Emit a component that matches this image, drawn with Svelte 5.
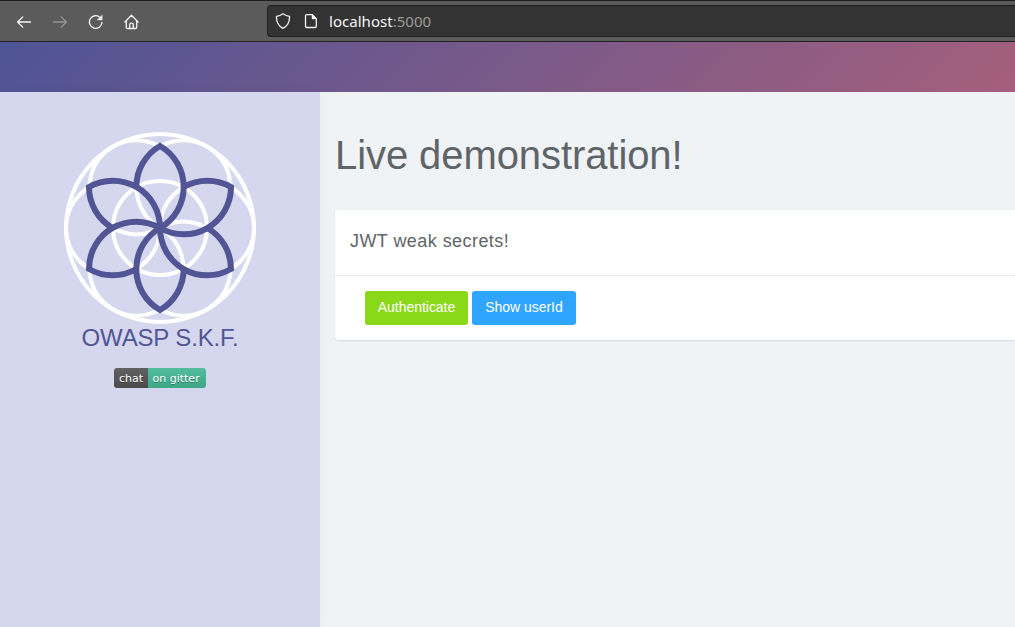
<script>
  const turns = [0, 60, 120, 180, 240, 300];
</script>

<div class="browser">
  <nav class="tools">
    <svg viewBox="0 0 16 16"><path d="M14.500 8H1.700M6.700 2.900 1.600 8l5.100 5.100" /></svg>
    <svg class="dim" viewBox="0 0 16 16"><path d="M1.500 8h12.800M9.300 2.900 14.400 8l-5.100 5.100" /></svg>
    <svg viewBox="0 0 16 16">
      <path d="M14 8.300A6.300 6.300 0 1 1 12.200 3.600" />
      <path class="solid" d="M14.200 1.200v4.800H9.400z" />
    </svg>
    <svg viewBox="0 0 16 16">
      <path d="M.9 8 7.500 1.300 14.100 8M2.300 6.900v6.500c0 .8.4 1.100 1.100 1.100h8.200c.7 0 1.100-.3 1.100-1.100V6.900M5.700 14.500v-3.700c0-1 .7-1.600 1.800-1.600s1.800.6 1.800 1.600v3.700" />
    </svg>
  </nav>
  <div class="address">
    <svg viewBox="0 0 16 16">
      <path d="M8 .8c2 1.500 4.100 2.300 6.500 2.500C14.800 9 12.700 13 8 15.300 3.300 13 1.200 9 1.500 3.300 3.900 3.100 6 2.300 8 .8z" />
    </svg>
    <svg viewBox="0 0 16 16">
      <path d="M3.700 1.700h5.600l4 4v7.600c0 .8-.4 1.200-1.200 1.200H3.700c-.8 0-1.200-.4-1.200-1.200V2.900c0-.8.4-1.200 1.200-1.200z" />
      <path class="solid" d="M9 1.700v4.300h4.300z" />
    </svg>
    <span class="url"><b>localhost</b>:5000</span>
  </div>
</div>

<header class="banner"></header>

<div class="layout">
  <aside>
    <svg class="logo" viewBox="-96 -96 192 192">
      <g class="rings">
        <circle r="94" />
        <circle r="47" />
        {#each turns as turn}
          <circle cx="47" r="47" transform="rotate({turn + 0})" />
        {/each}
      </g>
      <g class="petals">
        {#each turns as turn}
          <path d="M0 0A47.300 47.300 0 0 0 0-82A47.300 47.300 0 0 0-23.650-41" transform="rotate({turn})" />
        {/each}
      </g>
    </svg>
    <div class="brand">OWASP S.K.F.</div>
    <div class="badge"><span class="chat">chat</span><span class="gitter">on gitter</span></div>
  </aside>
  <main>
    <h1>Live demonstration!</h1>
    <section class="card">
      <h2>JWT weak secrets!</h2>
      <div class="actions">
        <button class="green">Authenticate</button>
        <button class="blue">Show userId</button>
      </div>
    </section>
  </main>
</div>

<style>
  :global(body) {
    margin: 0;
    overflow: hidden;
    background: #eff3f6;
    font-family: "Liberation Sans", Arial, sans-serif;
  }

  .browser {
    box-sizing: border-box;
    display: flex;
    height: 42px;
    padding-top: 4px;
    border-top: 1px solid #1e1e1e;
    border-bottom: 1px solid #222;
    background: #5b5b5b;
  }
  .tools {
    box-sizing: border-box;
    display: flex;
    gap: 20px;
    width: 267px;
    padding: 9px 0 0 16px;
  }
  .browser svg {
    flex: none;
    width: 16px;
    height: 16px;
    fill: none;
    stroke: #f5f5f5;
    stroke-width: 1.3;
    stroke-linecap: round;
    stroke-linejoin: round;
  }
  .browser svg.dim { stroke: #979797; }
  .browser .solid { fill: #f5f5f5; stroke-width: .4; }
  .address {
    box-sizing: border-box;
    display: flex;
    align-items: center;
    gap: 12px;
    flex: 1;
    height: 32px;
    padding-left: 7px;
    border: 1px solid #202020;
    border-right: 0;
    border-radius: 4px 0 0 4px;
    background: #333;
  }
  .url {
    margin-left: -2px;
    color: #9b9b9b;
    font: 15px/20px "Noto Sans", sans-serif;
    letter-spacing: .03px;
    white-space: nowrap;
  }
  .url b { color: #f8f8f8; font-weight: 400; }

  .banner {
    height: 50px;
    background: linear-gradient(135deg, #4e5496, #a55f7c);
  }
  .layout { display: flex; height: 535px; }
  aside {
    box-sizing: border-box;
    display: flex;
    flex-direction: column;
    align-items: center;
    flex: none;
    width: 320px;
    padding-top: 40px;
    background: #d5d7ee;
    box-shadow: 0 0 12px rgba(0, 0, 0, .05);
  }
  .logo { width: 192px; height: 192px; fill: none; }
  .rings { stroke: #fff; stroke-width: 4; }
  .petals { stroke: #515595; stroke-width: 6; }
  .brand {
    height: 28px;
    color: #515595;
    font-size: 24px;
    line-height: 28px;
    letter-spacing: -.14px;
    white-space: nowrap;
  }
  .badge {
    display: flex;
    width: 92px;
    height: 20px;
    margin-top: 16px;
    overflow: hidden;
    border-radius: 3px;
    color: #fff;
    font: 11px/21px "DejaVu Sans", sans-serif;
    text-shadow: 0 1px rgba(1, 1, 1, .3);
    white-space: nowrap;
  }
  .chat { width: 29px; padding-left: 5px; background: linear-gradient(#606060, #4b4b4b); }
  .gitter { flex: 1; padding-left: 4.500px; background: linear-gradient(#51bd9b, #3fa687); }

  main { flex: 1; min-width: 0; padding: 39px 0 0 15px; }
  h1, h2 { margin: 0; color: #5f6468; font-weight: 400; white-space: nowrap; }
  h1 { height: 79px; font-size: 40px; line-height: 48px; letter-spacing: -.08px; }
  .card {
    height: 130px;
    border-radius: 4px 0 0 4px;
    background: #fff;
    box-shadow: 0 1px 2px rgba(0, 0, 0, .1);
  }
  h2 {
    box-sizing: border-box;
    height: 66px;
    padding: 20px 15px 0;
    border-bottom: 1px solid #e9ecef;
    font-size: 18px;
    line-height: 22px;
    letter-spacing: .44px;
  }
  .actions { display: flex; gap: 4px; padding: 15px 30px; }
  button {
    height: 34px;
    padding: 0 0 2px;
    border: 0;
    border-radius: 3px;
    color: #fff;
    font: 14px/32px "Liberation Sans", Arial, sans-serif;
    letter-spacing: -.03px;
    white-space: nowrap;
  }
  .green { width: 103px; background: #8ad919; }
  .blue { width: 104px; background: #30a5ff; }
</style>
